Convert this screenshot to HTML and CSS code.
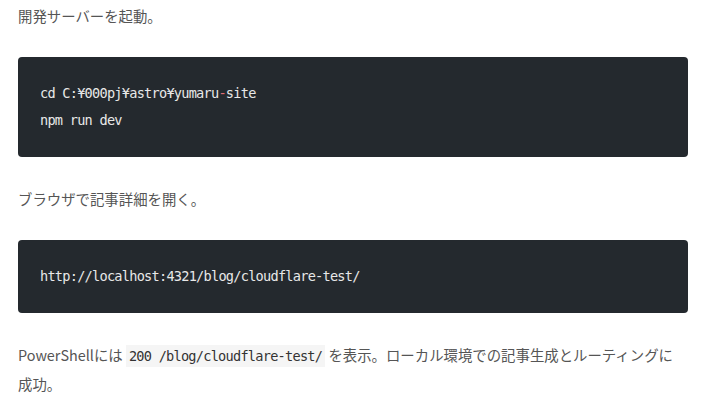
FILE: index.html
```html
<!DOCTYPE html>
<html lang="ja">
<head>
<meta charset="utf-8">
<link rel="stylesheet" href="styles.css">
</head>
<body>
<article class="post">
  <p class="text">開発サーバーを起動。</p>
  <pre class="code"><code>cd C:¥000pj¥astro¥yumaru<span class="err">-</span>site
npm run dev</code></pre>
  <p class="text">ブラウザで記事詳細を開く。</p>
  <pre class="code"><code>http://localhost:4321/blog/cloudflare-test/</code></pre>
  <p class="text text-last">PowerShellには <code class="inline">200 /blog/cloudflare-test/</code> を表示。ローカル環境での記事生成とルーティングに成功。</p>
</article>
</body>
</html>
```
FILE: styles.css
```css
html, body {
  margin: 0;
  padding: 0;
  background: #ffffff;
}
.post {
  width: 670px;
  padding: 2px 0 0 18px;
  font-family: "Noto Sans CJK JP", "Noto Sans", sans-serif;
  font-size: 14.4px;
  line-height: 27px;
  color: #555555;
}
.text {
  margin: 0 0 28px 0;
  max-width: 664px;
}
.text-last {
  margin-bottom: 0;
}
.code {
  margin: 0 0 28px 0;
  background: #24292e;
  border-radius: 4px;
  padding: 23px 22px;
  color: #e8e8e8;
  font-family: "DejaVu Sans Mono", monospace;
  font-size: 13.6px;
  letter-spacing: -0.75px;
  line-height: 27px;
  white-space: pre;
}
.code code {
  font-family: inherit;
}
.err {
  color: #e06c75;
}
.inline {
  font-family: "DejaVu Sans Mono", monospace;
  font-size: 13.6px;
  letter-spacing: -0.75px;
  color: #333333;
  background: #f5f5f5;
  padding: 3px 3px;
}
```
